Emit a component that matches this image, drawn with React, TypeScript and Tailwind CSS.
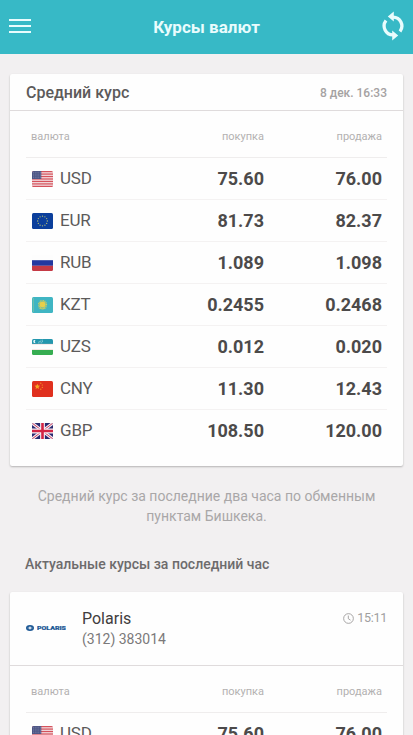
import React from 'react';

interface Rate {
  code: string;
  buy: string;
  sell: string;
}

const averageRates: Rate[] = [
  { code: 'USD', buy: '75.60', sell: '76.00' },
  { code: 'EUR', buy: '81.73', sell: '82.37' },
  { code: 'RUB', buy: '1.089', sell: '1.098' },
  { code: 'KZT', buy: '0.2455', sell: '0.2468' },
  { code: 'UZS', buy: '0.012', sell: '0.020' },
  { code: 'CNY', buy: '11.30', sell: '12.43' },
  { code: 'GBP', buy: '108.50', sell: '120.00' },
];

const polarisRates: Rate[] = [{ code: 'USD', buy: '75.60', sell: '76.00' }];

const euStars = Array.from({ length: 12 }, (_, i) => {
  const angle = (i * Math.PI) / 6;
  return { x: 10.5 + 4.8 * Math.sin(angle), y: 8 - 4.8 * Math.cos(angle) };
});

const flags: Record<string, React.ReactNode> = {
  USD: (
    <>
      <rect width="21" height="16" fill="#f3dfe2" />
      {[0, 1, 2, 3, 4, 5, 6].map((i) => (
        <rect key={i} y={i * 2.46} width="21" height="1.23" fill="#d5525c" />
      ))}
      <rect width="9.3" height="8" fill="#4b5484" />
      {[1.3, 3.1, 4.9, 6.7].map((y) => (
        <path key={y} d={`M1 ${y}h8`} stroke="#a3a8c6" strokeWidth="0.6" strokeDasharray="0.8 1" />
      ))}
    </>
  ),
  EUR: (
    <>
      <rect width="21" height="16" fill="#0b3f9c" />
      {euStars.map((s, i) => (
        <circle key={i} cx={s.x} cy={s.y} r="0.65" fill="#b4bf74" />
      ))}
    </>
  ),
  RUB: (
    <>
      <rect width="21" height="16" fill="#fdfdfd" />
      <rect y="5.2" width="21" height="5.6" fill="#2338a0" />
      <rect y="10.8" width="21" height="5.2" fill="#c53a45" />
    </>
  ),
  KZT: (
    <>
      <rect width="21" height="16" fill="#3fb5c3" />
      <circle cx="10.5" cy="7.5" r="3.8" fill="none" stroke="#c9cd62" strokeWidth="1.6" strokeDasharray="0.9 0.6" />
      <circle cx="10.5" cy="7.5" r="3" fill="#e6cf4b" />
      <path d="M6 10.5q4.5 4 9 0l-3.5 1h-2z" fill="#c9cd62" />
      <path d="M1.3 1v14" stroke="#7fc5a2" strokeWidth="0.8" />
    </>
  ),
  UZS: (
    <>
      <rect width="21" height="16" fill="#fdfdfd" />
      <rect width="21" height="5" fill="#2497ae" />
      <path d="M3.6 1.1a1.6 1.6 0 1 0 0 2.8a1.9 1.9 0 0 1 0-2.8" fill="#e5f6f8" />
      <path d="M6 3.8h5M6.8 2.5h4M8.6 1.2h2.4" stroke="#c0e5eb" strokeWidth="0.7" strokeDasharray="0.8 0.8" />
      <path d="M0 5.2h21M0 10.7h21" stroke="#e8b9b4" strokeWidth="0.4" />
      <rect y="11" width="21" height="5" fill="#36ad51" />
    </>
  ),
  CNY: (
    <>
      <rect width="21" height="16" fill="#e0301e" />
      <path
        d="M5.3 2.8l.8 1.8 2 .2-1.5 1.3.4 2-1.7-1-1.7 1 .4-2-1.5-1.3 2-.2z"
        fill="#f5a623"
      />
      <circle cx="8.8" cy="2.2" r="0.6" fill="#f5a623" />
      <circle cx="10.3" cy="4" r="0.6" fill="#f5a623" />
      <circle cx="10.3" cy="6.3" r="0.6" fill="#f5a623" />
      <circle cx="8.8" cy="8.2" r="0.6" fill="#f5a623" />
    </>
  ),
  GBP: (
    <>
      <rect width="21" height="16" fill="#29296f" />
      <path d="M0 0l21 16M21 0L0 16" stroke="#f2eaf3" strokeWidth="3" />
      <path d="M0 0l21 16M21 0L0 16" stroke="#cc3b57" strokeWidth="1" />
      <path d="M10.5 0v16M0 8h21" stroke="#f6eff5" strokeWidth="4.8" />
      <path d="M10.5 0v16M0 8h21" stroke="#d32444" strokeWidth="2.6" />
    </>
  ),
};

const Flag: React.FC<{ code: string }> = ({ code }) => (
  <svg viewBox="0 0 21 16" className="h-4 w-[21px] shrink-0 rounded-[1.5px]">
    {flags[code]}
  </svg>
);

const RefreshIcon: React.FC = () => (
  <svg viewBox="0 0 24 30" className="h-[30px] w-6">
    <path
      d="M12 6.1A8.9 8.9 0 0 1 19 20.4M12 23.9A8.9 8.9 0 0 1 5 9.6"
      fill="none"
      stroke="currentColor"
      strokeWidth="3.3"
    />
    <path d="M6.8 5.4L12.8 0.6v10zM17.2 24.6L11.2 29.4v-10z" fill="currentColor" />
  </svg>
);

const ClockIcon: React.FC = () => (
  <svg viewBox="0 0 12 12" className="h-[11px] w-[11px]" fill="none" stroke="#a09e9e" strokeWidth="1">
    <circle cx="6" cy="6" r="5.3" />
    <path d="M5.8 2.8v3.4l2.4 1.6" />
  </svg>
);

const PolarisLogo: React.FC = () => (
  <div className="flex w-10 items-center gap-[2.5px]">
    <svg viewBox="0 0 8 6" className="h-1.5 w-2 shrink-0">
      <ellipse cx="4" cy="3" rx="4" ry="2.9" fill="#1f5a96" />
      <path d="M4 .9l.7 1.5 2.2.6-2.2.6L4 5.1l-.7-1.5L1.1 3l2.2-.6z" fill="#fff" />
    </svg>
    <svg viewBox="0 0 29 6" className="h-1.5 w-[29px] shrink-0">
      <text
        x="0"
        y="4.8"
        textLength="29"
        lengthAdjust="spacingAndGlyphs"
        fill="#1f5a96"
        stroke="#1f5a96"
        strokeWidth="0.2"
        className="font-['Roboto',sans-serif] text-[5.4px] font-black"
      >
        POLARIS
      </text>
    </svg>
  </div>
);

const RatesTable: React.FC<{ rates: Rate[] }> = ({ rates }) => (
  <div className="px-4 pb-3.5">
    <div className="flex h-[47px] items-center border-b border-[#efeded] px-[5px] pt-[7px] text-[11px] text-[#b3b1b1]">
      <span className="flex-1">валюта</span>
      <span className="w-[110px] text-right">покупка</span>
      <span className="w-[118px] text-right">продажа</span>
    </div>
    {rates.map((rate) => (
      <div
        key={rate.code}
        className="flex h-[42px] items-center border-b border-[#f4f2f2] pr-[5px] pl-1.5 last:border-transparent"
      >
        <Flag code={rate.code} />
        <span className="ml-[7px] flex-1 text-[17px] tracking-[-0.2px] text-[#5c5a5a]">{rate.code}</span>
        <span className="w-[110px] text-right text-[18px] font-bold text-[#4c4a4a]">{rate.buy}</span>
        <span className="w-[118px] text-right text-[18px] font-bold text-[#4c4a4a]">{rate.sell}</span>
      </div>
    ))}
  </div>
);

const App: React.FC = () => {
  return (
    <div className="flex h-[735px] w-[413px] flex-col overflow-hidden bg-[#f2f0f1] font-['Roboto',sans-serif]">
      {/* Header */}
      <header className="flex h-[54px] shrink-0 items-center justify-between bg-[#37b9c6] pr-2 pl-[9px] text-[#e9fcfd]">
        <button className="flex w-[23px] flex-col gap-[4.5px] pb-0.5" aria-label="Меню">
          <span className="h-[1.8px] w-[22px] bg-current" />
          <span className="h-[1.8px] w-[22px] bg-current" />
          <span className="h-[1.8px] w-[22px] bg-current" />
        </button>
        <h1 className="pt-px text-[17px] font-bold">Курсы валют</h1>
        <button className="pb-[3px]" aria-label="Обновить">
          <RefreshIcon />
        </button>
      </header>

      {/* Average rates */}
      <section className="mx-2.5 mt-5 shrink-0 rounded-[2px] bg-[#fefefe] shadow-[0_1px_2px_rgba(0,0,0,0.25)]">
        <div className="flex h-[37px] items-center justify-between border-b border-[#dfdbdc] px-4">
          <h2 className="pt-px text-[16px] font-medium text-[#5c5a5a]">Средний курс</h2>
          <span className="pt-px text-[12px] font-medium text-[#a5a2a2]">8 дек. 16:33</span>
        </div>
        <RatesTable rates={averageRates} />
      </section>

      <p className="mt-5 shrink-0 text-center text-[14px] leading-5 text-[#a9a7a8]">
        Средний курс за последние два часа по обменным
        <br />
        пунктам Бишкека.
      </p>

      <h2 className="mt-7 ml-[25px] shrink-0 text-[14px] leading-5 font-medium text-[#6d6b6c]">
        Актуальные курсы за последний час
      </h2>

      {/* Exchange office */}
      <section className="mx-2.5 mt-[18px] shrink-0 rounded-[2px] bg-[#fefefe] shadow-[0_1px_2px_rgba(0,0,0,0.25)]">
        <div className="flex h-[74px] border-b border-[#dfdbdc] px-4">
          <div className="flex items-center pb-0.5">
            <PolarisLogo />
          </div>
          <div className="ml-4 flex-1 pt-4">
            <div className="text-[16px] leading-[21px] text-[#3f3d3d]">Polaris</div>
            <div className="text-[14px] leading-5 text-[#7b797a]">(312) 383014</div>
          </div>
          <div className="flex h-[53px] items-center gap-[3px] text-[12.5px] tracking-[-0.3px] text-[#a09e9e]">
            <ClockIcon />
            15:11
          </div>
        </div>
        <RatesTable rates={polarisRates} />
      </section>
    </div>
  );
};

export default App;
